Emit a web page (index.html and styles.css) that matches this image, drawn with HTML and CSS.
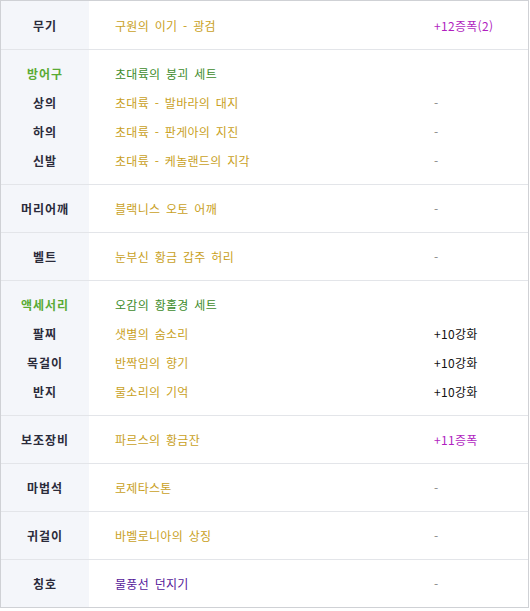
FILE: index.html
```html
<!DOCTYPE html>
<html lang="ko">
<head>
<meta charset="utf-8">
<link rel="stylesheet" href="styles.css">
</head>
<body>
<div class="equip">
  <div class="group">
    <div class="col label"><div class="line">무기</div></div>
    <div class="col name"><div class="line gold">구원의 이기 - 광검</div></div>
    <div class="col extra"><div class="line amp">+12증폭(2)</div></div>
  </div>
  <div class="group">
    <div class="col label">
      <div class="line set">방어구</div>
      <div class="line">상의</div>
      <div class="line">하의</div>
      <div class="line">신발</div>
    </div>
    <div class="col name">
      <div class="line setname">초대륙의 붕괴 세트</div>
      <div class="line gold">초대륙 - 발바라의 대지</div>
      <div class="line gold">초대륙 - 판게아의 지진</div>
      <div class="line gold">초대륙 - 케놀랜드의 지각</div>
    </div>
    <div class="col extra">
      <div class="line"></div>
      <div class="line dash">-</div>
      <div class="line dash">-</div>
      <div class="line dash">-</div>
    </div>
  </div>
  <div class="group">
    <div class="col label"><div class="line">머리어깨</div></div>
    <div class="col name"><div class="line gold">블랙니스 오토 어깨</div></div>
    <div class="col extra"><div class="line dash">-</div></div>
  </div>
  <div class="group">
    <div class="col label"><div class="line">벨트</div></div>
    <div class="col name"><div class="line gold">눈부신 황금 갑주 허리</div></div>
    <div class="col extra"><div class="line dash">-</div></div>
  </div>
  <div class="group">
    <div class="col label">
      <div class="line set">액세서리</div>
      <div class="line">팔찌</div>
      <div class="line">목걸이</div>
      <div class="line">반지</div>
    </div>
    <div class="col name">
      <div class="line setname">오감의 황홀경 세트</div>
      <div class="line gold">샛별의 숨소리</div>
      <div class="line gold">반짝임의 향기</div>
      <div class="line gold">물소리의 기억</div>
    </div>
    <div class="col extra">
      <div class="line"></div>
      <div class="line reinforce">+10강화</div>
      <div class="line reinforce">+10강화</div>
      <div class="line reinforce">+10강화</div>
    </div>
  </div>
  <div class="group">
    <div class="col label"><div class="line">보조장비</div></div>
    <div class="col name"><div class="line gold">파르스의 황금잔</div></div>
    <div class="col extra"><div class="line amp">+11증폭</div></div>
  </div>
  <div class="group">
    <div class="col label"><div class="line">마법석</div></div>
    <div class="col name"><div class="line gold">로제타스톤</div></div>
    <div class="col extra"><div class="line dash">-</div></div>
  </div>
  <div class="group">
    <div class="col label"><div class="line">귀걸이</div></div>
    <div class="col name"><div class="line gold">바벨로니아의 상징</div></div>
    <div class="col extra"><div class="line dash">-</div></div>
  </div>
  <div class="group">
    <div class="col label"><div class="line">칭호</div></div>
    <div class="col name"><div class="line title">물풍선 던지기</div></div>
    <div class="col extra"><div class="line dash">-</div></div>
  </div>
</div>
</body>
</html>
```

FILE: styles.css
```css
html, body {
  margin: 0;
  padding: 0;
  background: #ffffff;
}

.equip {
  width: 527px;
  border: 1px solid #cfd1d5;
  font-family: "Noto Sans CJK KR", "Noto Sans", sans-serif;
  font-size: 12px;
  letter-spacing: 0.3px;
}

.group {
  display: flex;
  border-bottom: 1px solid #e3e5e9;
}

.group:first-child .col {
  padding-top: 10px;
}

.group:last-child {
  border-bottom: none;
}

.col {
  padding: 9px 0;
}

.line {
  height: 29px;
  line-height: 29px;
  white-space: nowrap;
}

.label {
  width: 88px;
  background: #f4f6fa;
  text-align: center;
  font-weight: bold;
  color: #2b2b3a;
  letter-spacing: 1px;
}

.label .set {
  color: #5aab35;
}

.name {
  width: 319px;
  padding-left: 26px;
  word-spacing: 2px;
}

.extra {
  flex: 1;
}

.gold {
  color: #c9a11e;
}

.setname {
  color: #3e8c2c;
}

.title {
  color: #55199a;
}

.amp {
  color: #b11fbf;
}

.reinforce {
  color: #111111;
}

.dash {
  color: #8a8a8a;
}
```
